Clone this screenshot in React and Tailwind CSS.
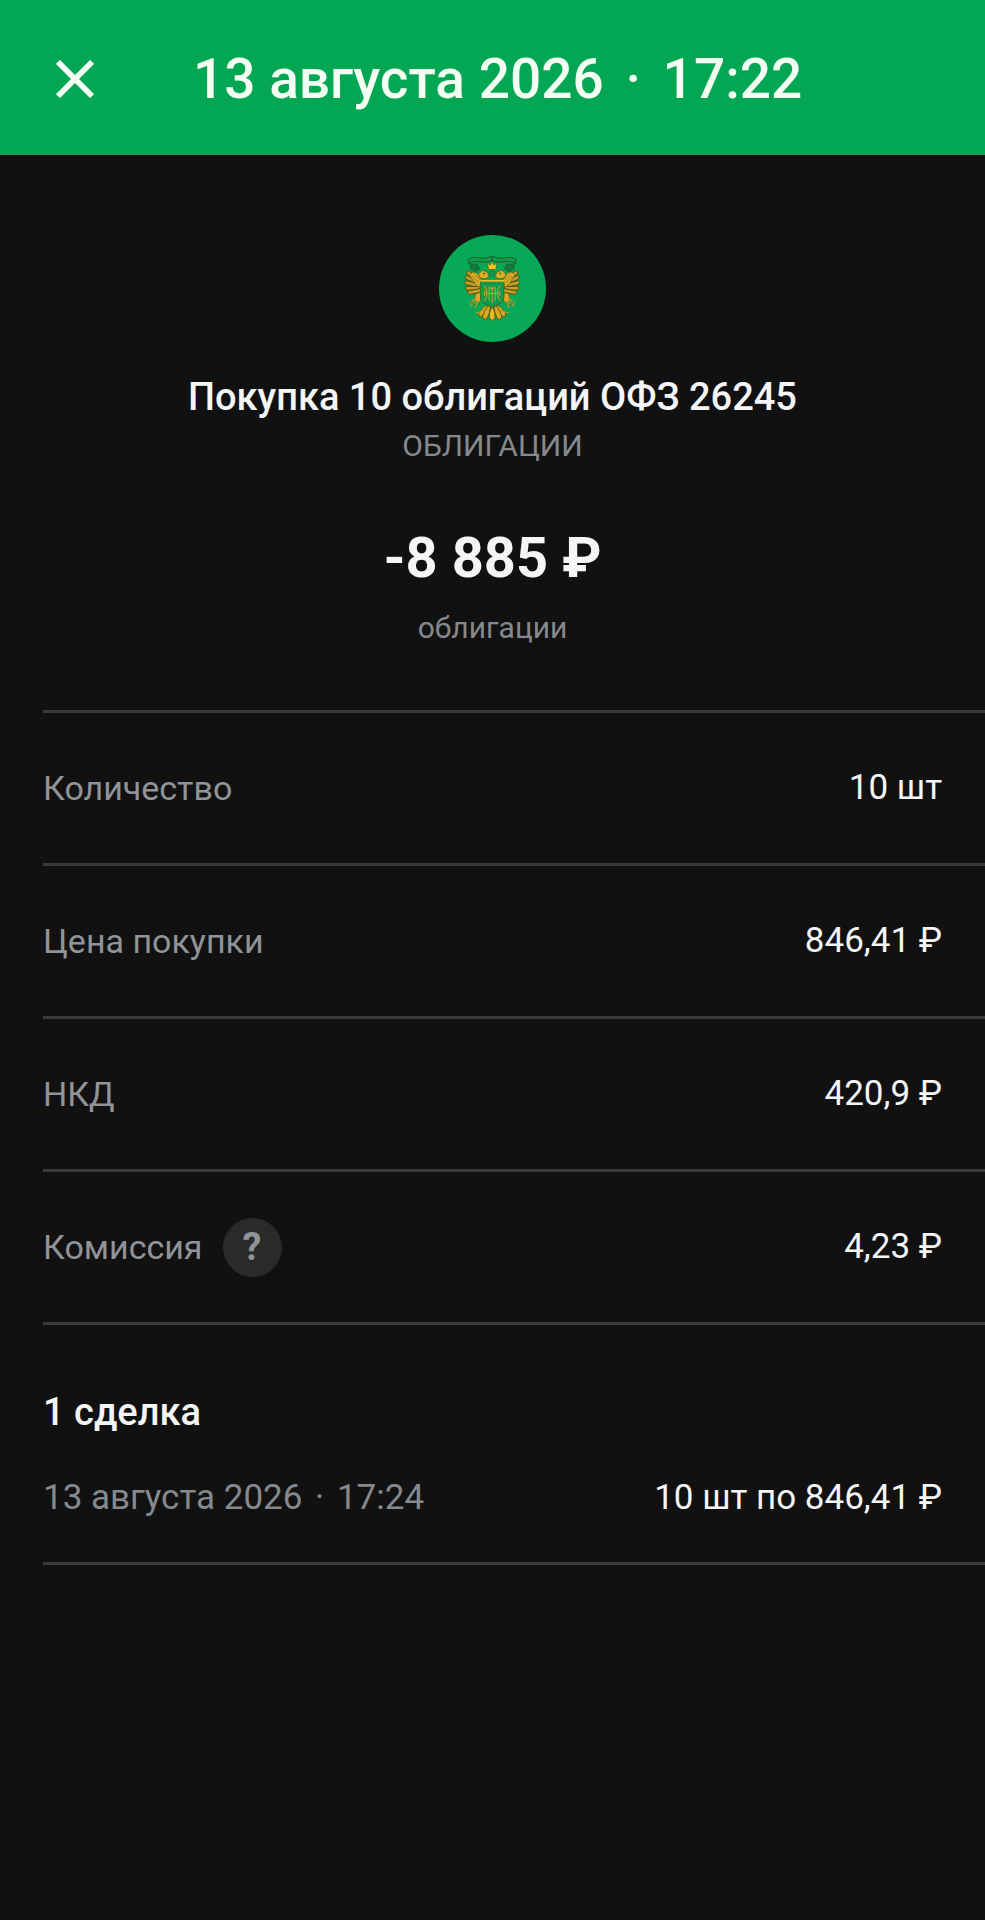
const details = [
  { label: 'Количество', value: '10 шт' },
  { label: 'Цена покупки', value: '846,41 ₽' },
  { label: 'НКД', value: '420,9 ₽' },
  { label: 'Комиссия', value: '4,23 ₽', hint: true },
]

const wingFeathers = [
  'M150 165 L116 138 Q109 138 110 148 L146 174 Z',
  'M150 172 L110 152 Q104 155 107 163 L147 182 Z',
  'M150 179 L108 168 Q102 173 107 180 L148 190 Z',
  'M151 186 L108 185 Q104 192 110 197 L150 197 Z',
  'M152 192 L113 200 Q111 208 119 210 L153 203 Z',
]

const tailFeathers = [
  'M168 243 Q156 252 147 266 Q144 279 156 277 Q170 262 176 246 Z',
  'M175 244 Q162 260 158 276 Q160 288 171 284 Q181 264 182 248 Z',
]

function EmblemHalf() {
  return (
    <g>
      <path d="M116 105 L130 98 L168 101 L187 95 L187 108 L168 113 L130 111 L116 117 Z" fill="#159c4b" stroke="#175c2e" strokeWidth="3" />
      <path d="M120 119 L142 118 L150 134 L134 142 L122 132 Z" fill="#127a3c" stroke="#175c2e" strokeWidth="2" />
      {wingFeathers.map((d) => (
        <path key={d} d={d} fill="#c99b1f" stroke="#4b551a" strokeWidth="3" />
      ))}
      <path d="M119 152 Q126 136 143 148 L154 164 L149 190 L136 178 Z" fill="#d9ac24" stroke="#6b6418" strokeWidth="2" />
      <path d="M127 156 L146 174 M133 150 L150 166" stroke="#8a6f18" strokeWidth="2" />
      <path d="M146 148 L158 137 L172 142 L178 156 L166 163 L150 160 Z" fill="#e0b024" stroke="#54591a" strokeWidth="2" />
      <circle cx="163" cy="147" r="3" fill="#276b2b" />
      <path d="M150 203 L137 209 L134 224 L145 235 L154 227 Z" fill="#e3a824" stroke="#54591a" strokeWidth="2" />
      <path d="M136 222 L120 236 M138 228 L122 245 M142 232 L136 249" stroke="#b99a27" strokeWidth="4" strokeLinecap="round" />
      <path d="M124 230 L134 243" stroke="#2d642b" strokeWidth="2" />
      {tailFeathers.map((d) => (
        <path key={d} d={d} fill="#d8aa20" stroke="#54591a" strokeWidth="3" />
      ))}
      <path d="M139 264 Q150 268 162 250" fill="none" stroke="#b99522" strokeWidth="4" strokeLinecap="round" />
    </g>
  )
}

function Emblem() {
  return (
    <svg viewBox="27 31 322 322" className="size-[107px]" role="img" aria-label="ОФЗ">
      <circle cx="188" cy="192" r="161" fill="#08a956" />
      <EmblemHalf />
      <g transform="translate(374 0) scale(-1 1)">
        <EmblemHalf />
      </g>
      <circle cx="187" cy="148" r="9" fill="#13984b" stroke="#2a6a2c" strokeWidth="2" />
      <path d="M173 114 L181 122 L187 111 L193 122 L201 114 L198 135 L176 135 Z" fill="#f3c623" stroke="#54591a" strokeWidth="2" />
      <path d="M187 245 Q174 270 180 284 Q187 292 194 284 Q200 270 187 245 Z" fill="#e8b923" stroke="#54591a" strokeWidth="3" />
      <path d="M152 170 H222 V221 Q222 235 205 239 L187 247 L169 239 Q152 235 152 221 Z" fill="#119a4d" stroke="#3a762b" strokeWidth="3" />
      <path d="M151 169 H223" stroke="#edbd2a" strokeWidth="5" />
      <path
        d="M163 184 Q171 190 171 207 Q171 222 163 229 M211 184 Q203 190 203 207 Q203 222 211 229 M164 199 V214 M210 199 V214 M187 184 V234 M178 229 V187 L187 196 L196 187 V229 M171 207 H203"
        fill="none"
        stroke="#c9a832"
        strokeWidth="3"
      />
    </svg>
  )
}

export default function App() {
  return (
    <main className="min-h-screen bg-[#111111] font-['Roboto','Noto_Sans',sans-serif] text-[35px] leading-[42px] text-[#f4f5f6]">
      <header className="flex items-center border-b border-[#3b8f58] bg-[#03a653] pt-[49px] pr-11 pb-[45px] pl-14 text-[#f3fff3]">
        <button type="button" aria-label="Закрыть" className="mr-[99px] shrink-0">
          <svg viewBox="0 0 40 40" className="size-[38px]" fill="none" stroke="currentColor" strokeWidth="6">
            <path d="M2 2 L38 38 M38 2 L2 38" />
          </svg>
        </button>
        <h1 className="text-[55px] leading-[60px] font-medium">
          13 августа 2026 <span className="mx-2">·</span> 17:22
        </h1>
      </header>

      <section className="flex flex-col items-center pt-20 pb-16 text-center">
        <Emblem />
        <h2 className="mt-8 text-[38px] leading-[46px] font-medium">Покупка 10 облигаций ОФЗ 26245</h2>
        <p className="mt-2 text-[30px] leading-9 text-[#85898d]">ОБЛИГАЦИИ</p>
        <p className="mt-[62px] text-[56px] leading-[64px] font-bold">-8 885 ₽</p>
        <p className="mt-5 text-[30px] leading-9 text-[#85898d]">облигации</p>
      </section>

      <dl className="ml-[43px] border-t-3 border-[#3a3a3a]">
        {details.map((item) => (
          <div key={item.label} className="flex min-h-[153px] items-center justify-between border-b-3 border-[#3a3a3a] pr-[43px]">
            <dt className="flex items-center gap-5 text-[34px] text-[#909498]">
              {item.label}
              {item.hint ? (
                <button type="button" aria-label="О комиссии" className="size-[59px] rounded-full bg-[#292a2a] text-[38px] font-bold">
                  ?
                </button>
              ) : null}
            </dt>
            <dd>{item.value}</dd>
          </div>
        ))}
      </dl>

      <section className="ml-[43px] border-b-3 border-[#3a3a3a] pt-16 pr-[43px] pb-[43px]">
        <h3 className="text-[38px] leading-[46px] font-medium">1 сделка</h3>
        <div className="mt-[42px] flex items-center justify-between">
          <p className="text-[#85898d]">
            13 августа 2026 <span className="mx-1">·</span> 17:24
          </p>
          <p>10 шт по 846,41 ₽</p>
        </div>
      </section>
    </main>
  )
}
